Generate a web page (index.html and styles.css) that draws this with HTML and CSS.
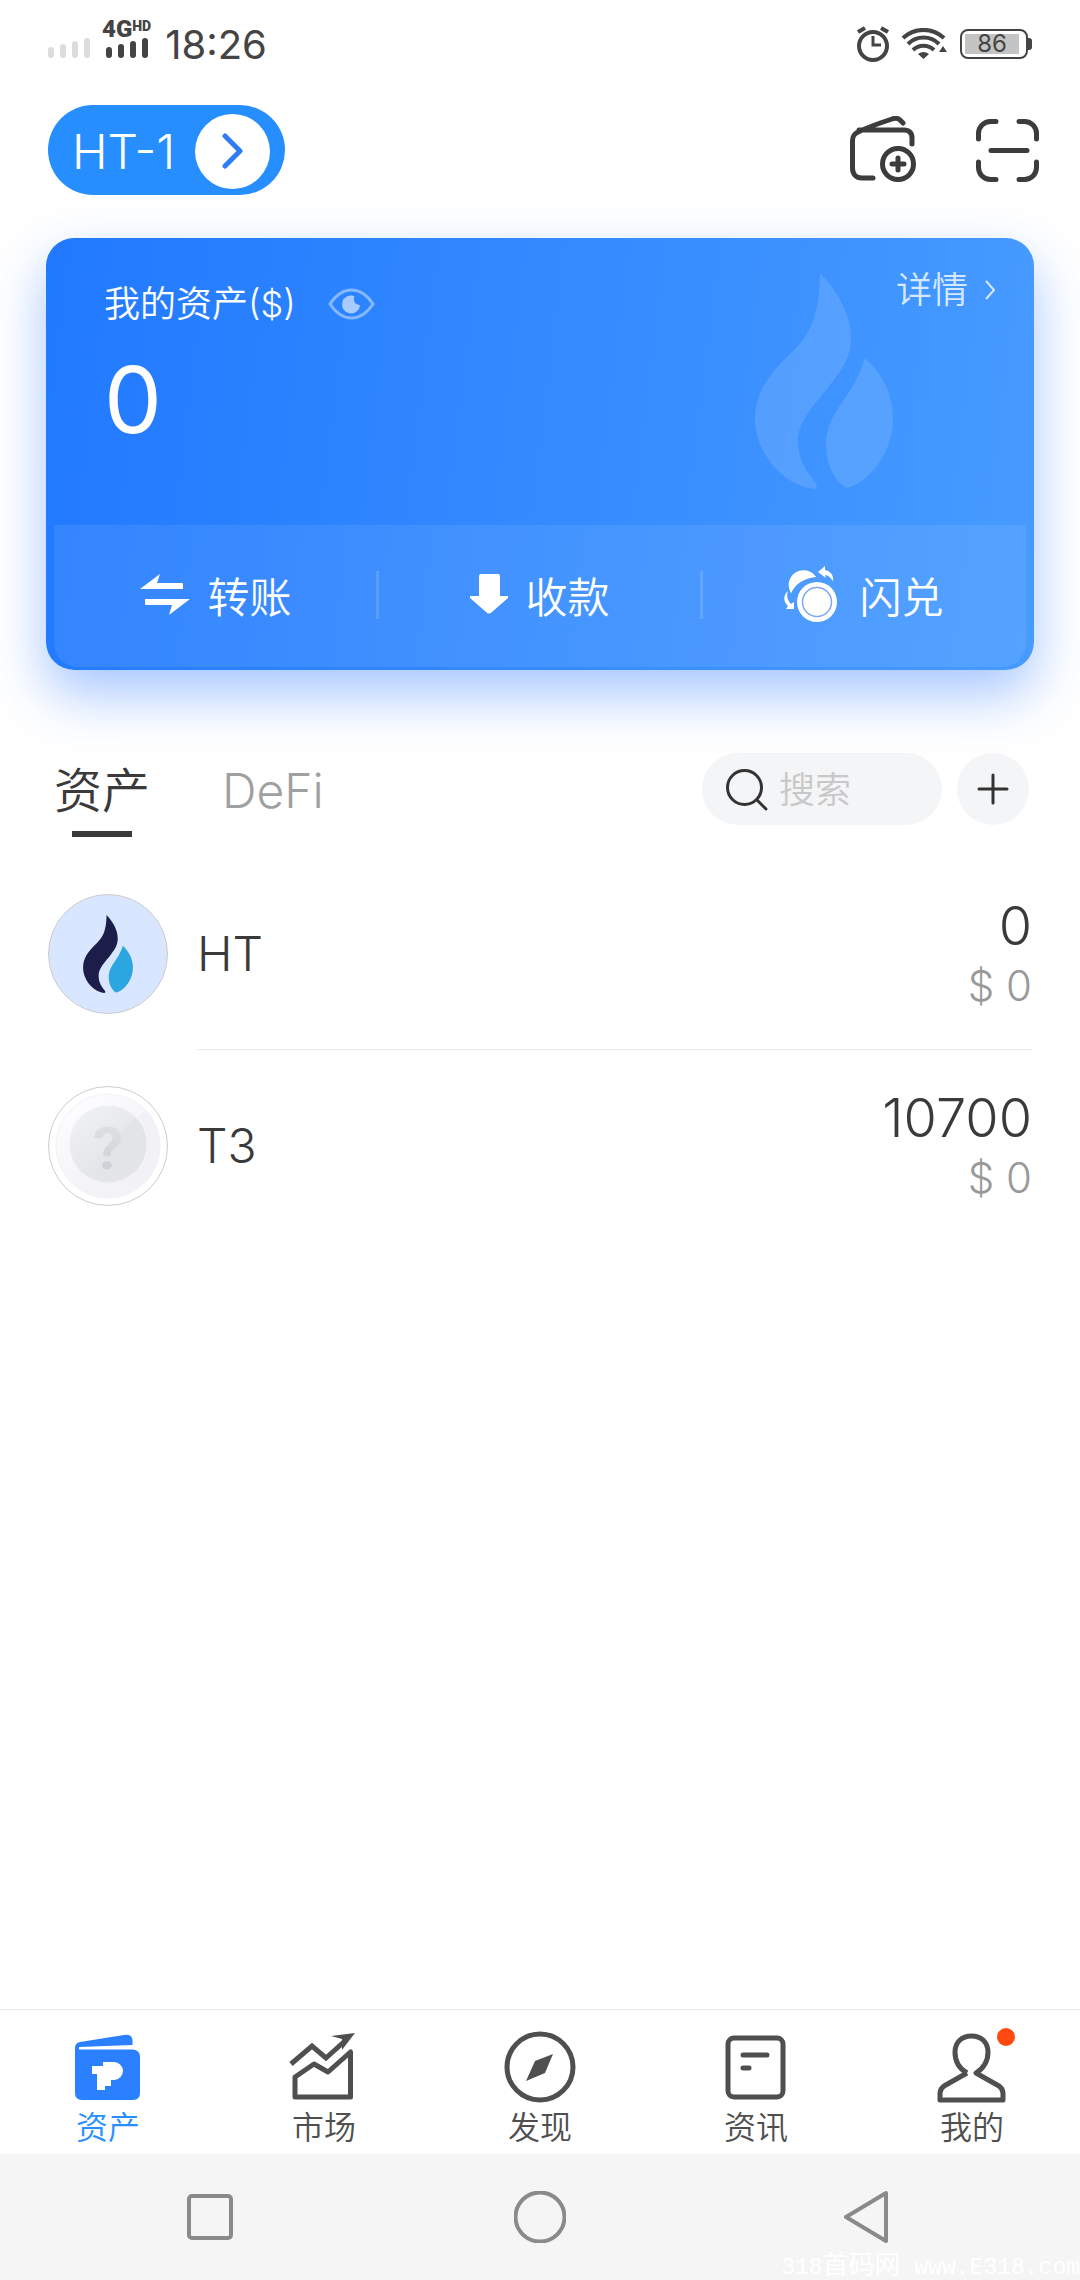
FILE: index.html
```html
<!DOCTYPE html>
<html lang="zh-CN">
<head>
<meta charset="utf-8">
<meta name="viewport" content="width=device-width, initial-scale=1">
<title>我的资产</title>
<link rel="stylesheet" href="styles.css">
</head>
<body>
<div class="app">
  <div class="status">
    <div class="status-left">
      <svg class="bars bars-off" width="43" height="20" viewBox="0 0 43 20"><path d="M3 12V17M15 9V17M27 6V17M39 3V17"/></svg>
      <div class="network">
        <div class="network-label"><span class="gen">4G</span><span class="hd">HD</span></div>
        <svg class="bars" width="43" height="20" viewBox="0 0 43 20"><path d="M3 12V17M15 9V17M27 6V17M39 3V17"/></svg>
      </div>
      <span class="clock">18:26</span>
    </div>
    <div class="status-right">
      <svg width="32" height="36" viewBox="0 0 32 36" fill="none" stroke="#444" stroke-width="4"><circle cx="16" cy="20" r="14"/><path d="M16 10V19H24" stroke-width="3"/><path d="M1 6L8 2M24 2L31 6"/></svg>
      <svg width="47" height="32" viewBox="0 0 47 32" fill="none" stroke="#444" stroke-width="4"><path d="M2 10A30 30 0 0 1 43 10M7 16A22 22 0 0 1 38 16M12 22A15 15 0 0 1 33 22"/><path fill="#444" stroke="none" d="M17 26Q22.500 22 28 26L22.500 31ZM38 24H46L42 18Z"/></svg>
      <div class="battery"><div class="battery-case"><div class="battery-fill">86</div></div><div class="battery-tip"></div></div>
    </div>
  </div>

  <header class="header">
    <button class="account" type="button">
      <span>HT-1</span>
      <span class="account-go"><svg width="22" height="36" viewBox="0 0 22 36"><path d="M3 3L18 18L3 33" fill="none" stroke="#2f7cf6" stroke-width="5" stroke-linecap="round" stroke-linejoin="round"/></svg></span>
    </button>
    <div class="header-tools">
      <button class="plain" type="button" aria-label="添加钱包">
        <svg class="line-icon" width="66" height="68" viewBox="0 0 66 68"><path d="M53 7L50 4C48 2 45 2 42 3C30 7 14 13 8 16C4 18 2.500 20 2.500 25V52C2.500 58 6 62 12 62H23M9 14H54C59 14 62 17 62 22V28"/><circle cx="48" cy="48" r="15.500"/><path d="M48 42V54M42 48H54"/></svg>
      </button>
      <button class="plain" type="button" aria-label="扫一扫">
        <svg class="line-icon" width="63" height="63" viewBox="0 0 63 63"><path d="M2.500 20V14.500A12 12 0 0 1 14.500 2.500H20M43 2.500H48.500A12 12 0 0 1 60.500 14.500V20M60.500 43V48.500A12 12 0 0 1 48.500 60.500H43M20 60.500H14.500A12 12 0 0 1 2.500 48.500V43M15 31.500H51"/></svg>
      </button>
    </div>
  </header>

  <section class="card">
    <svg class="card-flame" width="138" height="216" viewBox="0 0 138 216">
      <defs>
        <path id="flame-left" d="M65 0C82 18 96 40 96 66C96 84 87 96 78 108C62 130 43 146 43 168C43 186 51 198 60 209C63 213 62 216 58 216C24 211 0 176 0 146C0 120 14 102 32 84C50 66 64 54 65 0Z"/>
        <path id="flame-right" d="M110 85C126 100 138 120 138 146C138 176 118 206 95 214Q91 216 87 212C77 203 71 189 71 172C71 138 98 126 110 85Z"/>
      </defs>
      <use href="#flame-left"/><use href="#flame-right"/>
    </svg>
    <div class="card-top">
      <div class="card-total">
        <div class="card-title"><span>我的资产($)</span>
          <button class="plain" type="button" aria-label="隐藏金额"><svg width="47" height="32" viewBox="0 0 47 32"><path d="M2 16C10 4 17 2 23.500 2S37 4 45 16C37 28 30 30 23.500 30S10 28 2 16Z" fill="none" stroke="#85b8ff" stroke-width="3"/><path d="M26.500 8.200A9 9 0 1 0 32 17A6 6 0 0 1 26.500 8.200Z" fill="#a8ccff"/></svg></button>
        </div>
        <div class="card-value">0</div>
      </div>
      <a class="card-more" href="#detail">详情<svg width="12" height="22" viewBox="0 0 12 22"><path d="M2 2L10 11L2 20" fill="none" stroke="#d5e8ff" stroke-width="2"/></svg></a>
    </div>
    <div class="card-actions">
      <button class="action" type="button"><svg width="50" height="41" viewBox="0 0 50 41" fill="#fff"><path d="M0 15L20 0L17 9H42Q43 9 43 10V15ZM50 25L29 41L32 31H6Q5 31 5 30V25Z"/></svg>转账</button>
      <button class="action" type="button"><svg width="38" height="40" viewBox="0 0 38 40" fill="#fff"><path d="M9 2Q9 0 11 0H28Q30 0 30 2V22H38V24L22 38Q19 41 16 38L0 24V22H9Z"/></svg>收款</button>
      <button class="action" type="button"><svg width="58" height="57" viewBox="0 0 58 57" fill="#fff"><path d="M7 27A14.500 14.500 0 0 1 32 11A27 27 0 0 0 7 27ZM34 6L41 0V4C46 5 50 9 49 15C46 11 44 9 41 9L42 12ZM4 25C2 31 4 35 7 38L10 36V43H2L4 40C-1 36-1 29 4 25Z"/><path d="M7 27C4 12 20-2 32 11C20 12 11 18 7 27Z"/><circle cx="33" cy="36" r="20"/><circle cx="33" cy="36" r="14.500" fill="none" stroke="#7fa6f7" stroke-width="1.500"/></svg>闪兑</button>
    </div>
  </section>

  <div class="toolbar">
    <nav class="tabs">
      <a class="tab tab-on" href="#assets">资产</a>
      <a class="tab" href="#defi">DeFi</a>
    </nav>
    <div class="toolbar-right">
      <label class="search">
        <svg width="42" height="42" viewBox="0 0 42 42" fill="none" stroke="#333" stroke-width="3" stroke-linecap="round"><circle cx="18.500" cy="18.500" r="17"/><path d="M31 31L40 40"/></svg>
        <input type="search" placeholder="搜索" aria-label="搜索">
      </label>
      <button class="add" type="button" aria-label="添加资产"><svg width="32" height="32" viewBox="0 0 32 32"><path d="M16 2V30M2 16H30" stroke="#333" stroke-width="3" stroke-linecap="round"/></svg></button>
    </div>
  </div>

  <ul class="list">
    <li class="row">
      <div class="coin coin-ht"><svg width="50" height="78" viewBox="0 0 138 216"><use class="flame-dark" href="#flame-left"/><use class="flame-blue" href="#flame-right"/></svg></div>
      <div class="row-body">
        <span class="name">HT</span>
        <div class="amounts"><span class="amount">0</span><span class="fiat">$ 0</span></div>
      </div>
    </li>
    <li class="row">
      <div class="coin"><svg width="118" height="118" viewBox="0 0 118 118">
        <defs>
          <linearGradient id="rim" x1="0" y1="0" x2="0.800" y2="1"><stop offset="0.200" stop-color="#fcfcfe"/><stop offset="0.750" stop-color="#f2f2f7"/></linearGradient>
          <linearGradient id="face" x1="0" y1="0" x2="0.800" y2="1"><stop offset="0" stop-color="#f2f3f6"/><stop offset="0.700" stop-color="#e3e5e9"/></linearGradient>
          <linearGradient id="mark" x1="0" y1="0" x2="0" y2="1"><stop offset="0" stop-color="#e3e4e7"/><stop offset="1" stop-color="#c9cbd0"/></linearGradient>
        </defs>
        <circle cx="59" cy="59" r="52" fill="url(#rim)" stroke="#f2f3f7"/>
        <path d="M97 23A52 52 0 0 1 95 96L59 59Z" fill="#f1f1f6"/>
        <circle cx="59" cy="57" r="38.500" fill="url(#face)"/>
        <path d="M87 31A38.500 38.500 0 0 1 86 84L59 57Z" fill="#e2e4e8"/>
        <text class="coin-mark" x="59" y="82" text-anchor="middle" fill="url(#mark)">?</text>
      </svg></div>
      <div class="row-body">
        <span class="name">T3</span>
        <div class="amounts"><span class="amount">10700</span><span class="fiat">$ 0</span></div>
      </div>
    </li>
  </ul>

  <nav class="tabbar">
    <a class="item item-on" href="#assets"><svg width="72" height="72" viewBox="0 0 72 72"><path fill="#2a80ff" d="M3 17Q3 12 8 11L52 4Q60 3 60.500 9V14L7 16V18.500H61Q68 19 68 26V62Q68 69 61 69H10Q3 69 3 62Z"/><path fill="#fff" d="M20 35H31V31H42A9 9 0 0 1 42 49H39V55H33V59H25V43H20Z"/></svg>资产</a>
    <a class="item" href="#market"><svg class="tab-icon" width="72" height="72" viewBox="0 0 72 72"><path stroke-linejoin="miter" d="M3 33L24 15L38 27L58 9"/><path class="solid" d="M43 5L67 2L54 19L54 8Z"/><path d="M7 66V46L26 33L40 41L62.500 21V66Z"/></svg>市场</a>
    <a class="item" href="#discover"><svg class="tab-icon" width="72" height="72" viewBox="0 0 72 72"><circle cx="36" cy="36" r="33"/><path class="solid" d="M22 50L31 30L49 23L41 42Z"/></svg>发现</a>
    <a class="item" href="#news"><svg class="tab-icon" width="72" height="72" viewBox="0 0 72 72"><rect x="8" y="7" width="55" height="59" rx="6"/><path stroke-linecap="round" d="M23 24H47M23 37H29"/></svg>资讯</a>
    <a class="item" href="#me"><svg class="tab-icon" width="72" height="72" viewBox="0 0 72 72"><path d="M31 42C22 37 19 30 19 21C19 11 26 5 35.500 5S52 11 52 21C52 30 48 37 40 42L63 55Q67 58 67 62V69H4V62Q4 58 8 55L31 42"/></svg>我的<span class="dot"></span></a>
  </nav>

  <div class="sysnav">
    <button class="plain" type="button" aria-label="最近任务"><svg class="sys-icon" width="52" height="52" viewBox="0 0 52 52"><rect x="5" y="5" width="42" height="42" rx="3"/></svg></button>
    <button class="plain" type="button" aria-label="主屏幕"><svg class="sys-icon" width="52" height="52" viewBox="0 0 52 52"><circle cx="26" cy="26" r="24.500"/></svg></button>
    <button class="plain" type="button" aria-label="返回"><svg class="sys-icon" width="52" height="52" viewBox="0 0 52 52"><path d="M42 2L2 26L42 50Z"/></svg></button>
    <span class="watermark">318<span class="watermark-cjk">首码网</span> www.E318.com</span>
  </div>
</div>
</body>
</html>
```
FILE: styles.css
```css
* { box-sizing: border-box; }

body {
  margin: 0;
  background: #fff;
  color: #3a3a3a;
  font-family: "Inter", "Noto Sans CJK SC", sans-serif;
  font-weight: 350;
}

svg { display: block; flex: none; }
a { color: inherit; text-decoration: none; }
button { font: inherit; color: inherit; border: 0; padding: 0; background: none; }
.plain { display: block; }

.app { min-height: 100vh; display: flex; flex-direction: column; }

/* Status bar */
.status {
  height: 88px;
  padding: 0 48px;
  display: flex;
  justify-content: space-between;
  color: #444;
}
.status-left { display: flex; align-items: flex-end; padding-bottom: 30px; }
.bars { fill: none; stroke: #444; stroke-width: 6; stroke-linecap: round; }
.bars-off { stroke: #dcdcdc; }
.network { margin-left: 11px; padding-left: 4px; }
.network-label { display: flex; align-items: flex-start; margin-left: -4px; font-family: Roboto, sans-serif; font-weight: 900; }
.gen { font-size: 24px; line-height: 18px; }
.hd { font-size: 14px; line-height: 12px; }
.clock { margin-left: 14px; font-size: 40px; line-height: 27px; font-weight: 400; }
.status-right { display: flex; align-items: center; gap: 12px; }
.battery { display: flex; align-items: center; }
.battery-case { width: 68px; height: 30px; padding: 3px; border: 2px solid #444; border-radius: 8px; }
.battery-fill { width: 54px; height: 20px; background: #c4c4c2; font-size: 24px; line-height: 20px; font-weight: 400; text-align: center; }
.battery-tip { width: 4px; height: 12px; background: #444; border-radius: 0 3px 3px 0; }

/* Header */
.header {
  margin-top: 17px;
  padding: 0 41px 0 48px;
  display: flex;
  align-items: center;
  justify-content: space-between;
}
.account {
  height: 90px;
  padding: 2px 15px 0 24px;
  display: flex;
  align-items: center;
  gap: 20px;
  border-radius: 45px;
  background: #278eff;
  color: #fff;
  font-size: 48px;
}
.account-go { width: 75px; height: 75px; display: flex; align-items: center; justify-content: center; border-radius: 50%; background: #fff; }
.header-tools { display: flex; align-items: center; gap: 60px; }
.line-icon { fill: none; stroke: #3c3c3c; stroke-width: 5; stroke-linecap: round; stroke-linejoin: round; }

/* Balance card */
.card {
  position: relative;
  margin: 43px 46px 0;
  padding: 0 8px 3px;
  border-radius: 28px;
  background: linear-gradient(97deg, #2179ff, #479bff);
  box-shadow: 0 24px 54px rgba(40, 120, 255, 0.42);
  color: #fff;
}
.card-flame { position: absolute; top: 35px; right: 141px; fill: #fff; opacity: 0.12; }
.card-top { height: 287px; padding: 26px 30px 0 50px; display: flex; justify-content: space-between; align-items: flex-start; }
.card-title { display: flex; align-items: center; gap: 32px; margin-top: 16px; font-size: 36px; line-height: 48px; }
.card-value { margin-top: 22px; font-size: 92px; line-height: 100px; font-weight: 400; }
.card-more { display: flex; align-items: center; gap: 16px; font-size: 36px; line-height: 52px; color: #d5e8ff; }
.card-actions { display: grid; grid-template-columns: repeat(3, 1fr); height: 142px; border-radius: 0 0 24px 24px; background: rgba(255, 255, 255, 0.08); }
.action { display: flex; align-items: center; justify-content: center; gap: 17px; padding-bottom: 4px; font-size: 42px; position: relative; }
.action + .action::before { content: ""; position: absolute; left: -2px; top: 46px; width: 3px; height: 48px; background: rgba(255, 255, 255, 0.15); }

/* Tabs and search */
.toolbar { margin-top: 83px; padding: 0 51px 0 54px; display: flex; justify-content: space-between; align-items: flex-start; }
.tabs { display: flex; gap: 72px; font-size: 48px; line-height: 76px; color: #a0a0a0; }
.tab-on { color: #3a3a3a; }
.tab::after { content: ""; display: block; width: 60px; height: 6px; margin: 2px auto 0; }
.tab-on::after { background: #3a3a3a; }
.toolbar-right { display: flex; gap: 15px; }
.search { width: 240px; height: 72px; padding: 2px 24px 0; display: flex; align-items: center; gap: 11px; border-radius: 36px; background: #f4f5f7; }
.search input { flex: 1; min-width: 0; border: 0; padding: 0; background: none; outline: 0; font: inherit; font-size: 36px; color: #333; }
.search input::placeholder { color: #c8c8c8; opacity: 1; }
.add { width: 72px; height: 72px; display: flex; align-items: center; justify-content: center; border-radius: 50%; background: #f4f5f7; }

/* Asset list */
.list { list-style: none; margin: 21px 0 0; padding: 0 48px; flex: 1; }
.row { display: flex; align-items: center; gap: 29px; }
.coin { flex: none; width: 120px; height: 120px; display: flex; align-items: center; justify-content: center; border: 1px solid #ccc; border-radius: 50%; }
.coin-ht { background: #d9e6ff; }
.coin-mark { font-family: Roboto, sans-serif; font-size: 60px; font-weight: 700; }
.flame-dark { fill: #1c1d48; }
.flame-blue { fill: #2ca6e0; }
.row-body { flex: 1; height: 192px; display: flex; align-items: center; justify-content: space-between; border-bottom: 1px solid #ebebeb; }
.row:last-child .row-body { border-bottom-color: transparent; }
.name { font-size: 48px; }
.amounts { display: flex; flex-direction: column; align-items: flex-end; }
.amount { font-size: 54px; line-height: 64px; }
.fiat { font-size: 42px; line-height: 56px; color: #999; }

/* Bottom tabs */
.tabbar { display: grid; grid-template-columns: repeat(5, 1fr); height: 145px; border-top: 1px solid #e8e8e8; color: #4f4f4f; }
.item { position: relative; display: flex; flex-direction: column; align-items: center; padding-top: 21px; font-size: 32px; line-height: 50px; }
.item-on { color: #278eff; }
.tab-icon { fill: none; stroke: #4f4f4f; stroke-width: 5; stroke-linejoin: round; }
.tab-icon .solid { fill: #4f4f4f; stroke: none; }
.dot { position: absolute; top: 18px; left: calc(50% + 25px); width: 18px; height: 18px; border-radius: 50%; background: #ff4a0f; }

/* System navigation */
.sysnav { position: relative; height: 126px; padding: 0 45px; display: flex; align-items: center; justify-content: space-around; background: #f5f5f5; overflow: hidden; }
.sys-icon { fill: none; stroke: #8a8a8a; stroke-width: 4; stroke-linejoin: round; }
.watermark { position: absolute; right: 0; bottom: 0; color: #fff; font-family: "Liberation Mono", monospace; font-size: 23px; line-height: 24px; font-weight: 400; white-space: pre; }
.watermark-cjk { font-family: "Noto Sans CJK SC", sans-serif; font-size: 26px; }
```
